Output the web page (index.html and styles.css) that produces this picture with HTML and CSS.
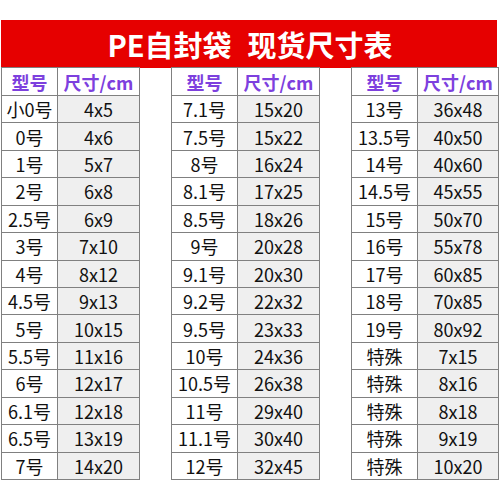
FILE: index.html
```html
<!DOCTYPE html>
<html lang="zh">
<head>
    <meta charset="UTF-8">
    <title>PE自封袋 现货尺寸表</title>
    <link rel="stylesheet" href="styles.css">
</head>
<body>

<div class="sheet">
    <div class="banner">
        <span>PE自封袋</span>
        <span>现货尺寸表</span>
    </div>

    <div class="tables">
        <div class="size-table narrow">
            <div class="head">型号</div><div class="head">尺寸/cm</div>
            <div>小0号</div><div class="size">4x5</div>
            <div>0号</div><div class="size">4x6</div>
            <div>1号</div><div class="size">5x7</div>
            <div>2号</div><div class="size">6x8</div>
            <div>2.5号</div><div class="size">6x9</div>
            <div>3号</div><div class="size">7x10</div>
            <div>4号</div><div class="size">8x12</div>
            <div>4.5号</div><div class="size">9x13</div>
            <div>5号</div><div class="size">10x15</div>
            <div>5.5号</div><div class="size">11x16</div>
            <div>6号</div><div class="size">12x17</div>
            <div>6.1号</div><div class="size">12x18</div>
            <div>6.5号</div><div class="size">13x19</div>
            <div>7号</div><div class="size">14x20</div>
        </div>

        <div class="size-table">
            <div class="head">型号</div><div class="head">尺寸/cm</div>
            <div>7.1号</div><div class="size">15x20</div>
            <div>7.5号</div><div class="size">15x22</div>
            <div>8号</div><div class="size">16x24</div>
            <div>8.1号</div><div class="size">17x25</div>
            <div>8.5号</div><div class="size">18x26</div>
            <div>9号</div><div class="size">20x28</div>
            <div>9.1号</div><div class="size">20x30</div>
            <div>9.2号</div><div class="size">22x32</div>
            <div>9.5号</div><div class="size">23x33</div>
            <div>10号</div><div class="size">24x36</div>
            <div>10.5号</div><div class="size">26x38</div>
            <div>11号</div><div class="size">29x40</div>
            <div>11.1号</div><div class="size">30x40</div>
            <div>12号</div><div class="size">32x45</div>
        </div>

        <div class="size-table last">
            <div class="head">型号</div><div class="head">尺寸/cm</div>
            <div>13号</div><div class="size">36x48</div>
            <div>13.5号</div><div class="size">40x50</div>
            <div>14号</div><div class="size">40x60</div>
            <div>14.5号</div><div class="size">45x55</div>
            <div>15号</div><div class="size">50x70</div>
            <div>16号</div><div class="size">55x78</div>
            <div>17号</div><div class="size">60x85</div>
            <div>18号</div><div class="size">70x85</div>
            <div>19号</div><div class="size">80x92</div>
            <div>特殊</div><div class="size">7x15</div>
            <div>特殊</div><div class="size">8x16</div>
            <div>特殊</div><div class="size">8x18</div>
            <div>特殊</div><div class="size">9x19</div>
            <div>特殊</div><div class="size">10x20</div>
        </div>
    </div>
</div>

</body>
</html>
```

FILE: styles.css
```css
body {
    margin: 0;
    background-color: #fff;
    font-family: "Noto Sans CJK SC", "Noto Sans", sans-serif;
    color: #111;
}
.sheet {
    width: 500px;
    height: 500px;
    padding-top: 20px;
    box-sizing: border-box;
}
.banner {
    margin-left: 1px;
    width: 496px;
    height: 48px;
    background-color: #e60000;
    color: #fff;
    font-size: 29px;
    font-weight: bold;
    display: flex;
    justify-content: center;
    align-items: center;
    gap: 16px;
    padding-left: 2px;
    box-sizing: border-box;
}
.tables {
    display: flex;
    gap: 31px;
    padding-left: 1px;
}
.size-table {
    display: grid;
    grid-template-columns: 66px 82px;
    grid-template-rows: 28px repeat(14, 1fr);
    height: 412px;
    border-left: 1px solid #808080;
    border-top: 1px solid #808080;
    margin-top: -1px;
}
.size-table.narrow {
    grid-template-columns: 56px 82px;
}
.size-table.last {
    grid-template-columns: 66px 81px;
}
.size-table div {
    border-right: 1px solid #808080;
    border-bottom: 1px solid #808080;
    display: flex;
    align-items: center;
    justify-content: center;
    font-size: 18px;
    background-color: #fff;
    white-space: nowrap;
}
.size-table .size {
    background-color: #efefef;
}
.size-table .head {
    background-color: #fff;
    color: #7d40de;
    font-weight: bold;
}
```
